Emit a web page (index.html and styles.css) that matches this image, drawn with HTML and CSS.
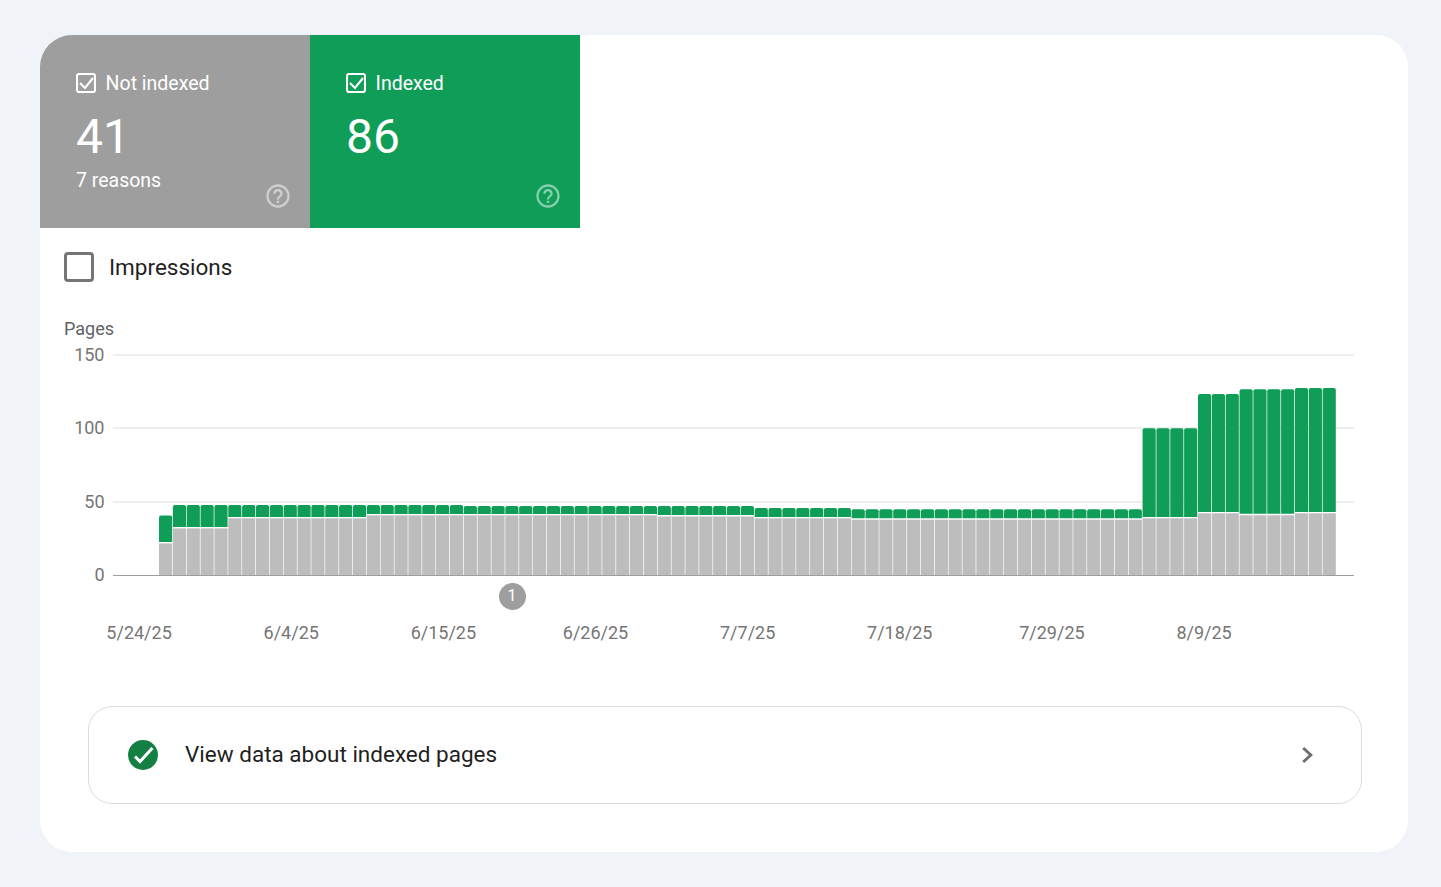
FILE: index.html
```html
<!DOCTYPE html>
<html lang="en">
<head>
<meta charset="utf-8">
<title>Page indexing</title>
<link rel="stylesheet" href="styles.css">
</head>
<body>
<main class="card">
  <section class="tiles">
    <div class="tile tile-gray">
      <div class="tile-head">
        <svg class="tile-check" viewBox="0 0 20 20"><rect x="1" y="1" width="18" height="18" rx="2"/><path d="M4 10l5 5 8-10"/></svg>
        <span>Not indexed</span>
      </div>
      <div class="tile-num">41</div>
      <div class="tile-sub">7 reasons</div>
      <svg class="tile-help" viewBox="0 0 24 24"><path d="M11 18h2v-2h-2v2zm1-16C6.48 2 2 6.48 2 12s4.48 10 10 10 10-4.48 10-10S17.52 2 12 2zm0 18c-4.41 0-8-3.59-8-8s3.59-8 8-8 8 3.59 8 8-3.59 8-8 8zm0-14c-2.21 0-4 1.79-4 4h2c0-1.1.9-2 2-2s2 .9 2 2c0 2-3 1.75-3 5h2c0-2.25 3-2.5 3-5 0-2.21-1.79-4-4-4z"/></svg>
    </div>
    <div class="tile tile-green">
      <div class="tile-head">
        <svg class="tile-check" viewBox="0 0 20 20"><rect x="1" y="1" width="18" height="18" rx="2"/><path d="M4 10l5 5 8-10"/></svg>
        <span>Indexed</span>
      </div>
      <div class="tile-num">86</div>
      <svg class="tile-help" viewBox="0 0 24 24"><path d="M11 18h2v-2h-2v2zm1-16C6.48 2 2 6.48 2 12s4.48 10 10 10 10-4.48 10-10S17.52 2 12 2zm0 18c-4.41 0-8-3.59-8-8s3.59-8 8-8 8 3.59 8 8-3.59 8-8 8zm0-14c-2.21 0-4 1.79-4 4h2c0-1.1.9-2 2-2s2 .9 2 2c0 2-3 1.75-3 5h2c0-2.25 3-2.5 3-5 0-2.21-1.79-4-4-4z"/></svg>
    </div>
  </section>

  <label class="metric"><span class="box"></span><span>Impressions</span></label>

  <section class="chart">
    <div class="y-title">Pages</div>
    <div class="plot">
      <div class="row"><span class="tick">150</span><span class="line"></span></div>
      <div class="row"><span class="tick">100</span><span class="line"></span></div>
      <div class="row"><span class="tick">50</span><span class="line"></span></div>
      <div class="row row-base"><span class="tick">0</span><span class="line"></span></div>
      <svg class="bars" viewBox="0 0 85 220" preserveAspectRatio="none">
        <defs>
          <g id="a"><path class="gr" d="M0 162.5Q0 160.5 .145 160.5H.805Q.95 160.5 .95 162.5V187H0Z"/><rect class="gy" width=".95" y="188.4" height="31.6"/></g>
          <g id="c"><path class="gr" d="M0 152Q0 150 .145 150H.805Q.95 150 .95 152V172H0Z"/><rect class="gy" width=".95" y="173.4" height="46.6"/></g>
          <g id="d"><path class="gr" d="M0 152Q0 150 .145 150H.805Q.95 150 .95 152V162H0Z"/><rect class="gy" width=".95" y="163.3" height="56.7"/></g>
          <g id="e"><path class="gr" d="M0 152Q0 150 .145 150H.805Q.95 150 .95 152V159H0Z"/><rect class="gy" width=".95" y="160.3" height="59.7"/></g>
          <g id="f"><path class="gr" d="M0 153Q0 151 .145 151H.805Q.95 151 .95 153V159H0Z"/><rect class="gy" width=".95" y="160.3" height="59.7"/></g>
          <g id="g"><path class="gr" d="M0 153Q0 151 .145 151H.805Q.95 151 .95 153V160H0Z"/><rect class="gy" width=".95" y="161.5" height="58.5"/></g>
          <g id="h"><path class="gr" d="M0 155Q0 153 .145 153H.805Q.95 153 .95 155V162H0Z"/><rect class="gy" width=".95" y="163.3" height="56.7"/></g>
          <g id="j"><path class="gr" d="M0 156.3Q0 154.3 .145 154.3H.805Q.95 154.3 .95 156.3V163.3H0Z"/><rect class="gy" width=".95" y="164.7" height="55.3"/></g>
          <g id="k"><path class="gr" d="M0 75.3Q0 73.3 .145 73.3H.805Q.95 73.3 .95 75.3V162H0Z"/><rect class="gy" width=".95" y="163.3" height="56.7"/></g>
          <g id="l"><path class="gr" d="M0 41Q0 39 .145 39H.805Q.95 39 .95 41V157H0Z"/><rect class="gy" width=".95" y="158.3" height="61.7"/></g>
          <g id="m"><path class="gr" d="M0 36.3Q0 34.3 .145 34.3H.805Q.95 34.3 .95 36.3V158.7H0Z"/><rect class="gy" width=".95" y="160.3" height="59.7"/></g>
          <g id="n"><path class="gr" d="M0 35Q0 33 .145 33H.805Q.95 33 .95 35V157H0Z"/><rect class="gy" width=".95" y="158.3" height="61.7"/></g>
        </defs>
        <use href="#a" x="0"/>
        <use href="#c" x="1"/><use href="#c" x="2"/><use href="#c" x="3"/><use href="#c" x="4"/>
        <use href="#d" x="5"/><use href="#d" x="6"/><use href="#d" x="7"/><use href="#d" x="8"/><use href="#d" x="9"/><use href="#d" x="10"/><use href="#d" x="11"/><use href="#d" x="12"/><use href="#d" x="13"/><use href="#d" x="14"/>
        <use href="#e" x="15"/><use href="#e" x="16"/><use href="#e" x="17"/><use href="#e" x="18"/><use href="#e" x="19"/><use href="#e" x="20"/><use href="#e" x="21"/>
        <use href="#f" x="22"/><use href="#f" x="23"/><use href="#f" x="24"/><use href="#f" x="25"/><use href="#f" x="26"/><use href="#f" x="27"/><use href="#f" x="28"/><use href="#f" x="29"/><use href="#f" x="30"/><use href="#f" x="31"/><use href="#f" x="32"/><use href="#f" x="33"/><use href="#f" x="34"/><use href="#f" x="35"/>
        <use href="#g" x="36"/><use href="#g" x="37"/><use href="#g" x="38"/><use href="#g" x="39"/><use href="#g" x="40"/><use href="#g" x="41"/><use href="#g" x="42"/>
        <use href="#h" x="43"/><use href="#h" x="44"/><use href="#h" x="45"/><use href="#h" x="46"/><use href="#h" x="47"/><use href="#h" x="48"/><use href="#h" x="49"/>
        <use href="#j" x="50"/><use href="#j" x="51"/><use href="#j" x="52"/><use href="#j" x="53"/><use href="#j" x="54"/><use href="#j" x="55"/><use href="#j" x="56"/><use href="#j" x="57"/><use href="#j" x="58"/><use href="#j" x="59"/><use href="#j" x="60"/><use href="#j" x="61"/><use href="#j" x="62"/><use href="#j" x="63"/><use href="#j" x="64"/><use href="#j" x="65"/><use href="#j" x="66"/><use href="#j" x="67"/><use href="#j" x="68"/><use href="#j" x="69"/><use href="#j" x="70"/>
        <use href="#k" x="71"/><use href="#k" x="72"/><use href="#k" x="73"/><use href="#k" x="74"/>
        <use href="#l" x="75"/><use href="#l" x="76"/><use href="#l" x="77"/>
        <use href="#m" x="78"/><use href="#m" x="79"/><use href="#m" x="80"/><use href="#m" x="81"/>
        <use href="#n" x="82"/><use href="#n" x="83"/><use href="#n" x="84"/>
      </svg>
      <span class="marker">1</span>
    </div>
    <div class="dates">
      <span>5/24/25</span><span>6/4/25</span><span>6/15/25</span><span>6/26/25</span><span>7/7/25</span><span>7/18/25</span><span>7/29/25</span><span>8/9/25</span>
    </div>
  </section>

  <a class="link-card">
    <svg class="ok" viewBox="0 0 30 30"><circle cx="15" cy="15" r="15"/><path d="M7 16.5l5 5 12.4-13.5"/></svg>
    <span class="link-text">View data about indexed pages</span>
    <svg class="chev" viewBox="0 0 12 18"><path d="M2.2 2l7.6 7-7.6 7"/></svg>
  </a>
</main>
</body>
</html>
```
FILE: styles.css
```css
* { box-sizing: border-box; }
html, body { height: 100%; }
body {
  margin: 0;
  padding: 35px 33px 35px 40px;
  background: #f0f4f9;
  font-family: Roboto, "Liberation Sans", sans-serif;
  color: #1f1f1f;
  overflow: hidden;
}
.card {
  height: 817px;
  background: #fff;
  border-radius: 32px;
  overflow: hidden;
}
.tiles { display: flex; }
.tile {
  position: relative;
  width: 270px;
  height: 193px;
  padding: 36px 36px 0;
  color: #fff;
}
.tile-gray { background: #9e9e9e; }
.tile-green { background: #0f9d58; }
.tile-head {
  display: flex;
  align-items: center;
  gap: 9.6px;
  height: 24px;
  font-size: 19.5px;
}
.tile-check { width: 20px; height: 20px; fill: none; stroke: #fff; stroke-width: 2.1; }
.tile-num {
  margin-top: 14px;
  font-size: 48px;
  line-height: 56px;
}
.tile-sub {
  margin-top: 4px;
  font-size: 19.5px;
  line-height: 24px;
}
.tile-help {
  position: absolute;
  right: 18px;
  bottom: 18px;
  width: 28px;
  height: 28px;
  fill: rgba(255, 255, 255, .5);
}
.metric {
  display: flex;
  align-items: center;
  gap: 15px;
  margin: 24px 0 0 24px;
  font-size: 22.5px;
  line-height: 30px;
}
.box {
  width: 30px;
  height: 30px;
  border: 3px solid #757575;
  border-radius: 4px;
}
.chart { margin: 0 0 0 24px; }
.y-title {
  margin-top: 35px;
  font-size: 18px;
  line-height: 24px;
  color: #5f6368;
}
.plot { position: relative; margin-top: 2px; }
.row {
  display: flex;
  align-items: flex-start;
  height: 73.33px;
  font-size: 18px;
  color: #757575;
}
.row-base { height: 24px; }
.tick { width: 40.5px; text-align: right; line-height: 24px; }
.line {
  margin: 11px 0 0 8.5px;
  width: 1241px;
  height: 2px;
  background: #eeeeee;
}
.row-base .line { margin-top: 12px; height: 1px; background: #9e9e9e; }
.bars {
  position: absolute;
  left: 95px;
  top: 12px;
  width: 1177.5px;
  height: 220px;
}
.gr { fill: #0f9d58; }
.gy { fill: #bdbdbd; }
.marker {
  position: absolute;
  left: 434.5px;
  top: 240px;
  width: 27px;
  height: 27px;
  border-radius: 50%;
  background: #9e9e9e;
  color: #fff;
  font-size: 16px;
  line-height: 26px;
  text-align: center;
}
.dates {
  display: flex;
  margin: 0 0 0 -1px;
  padding-top: 34px;
  font-size: 18px;
  line-height: 24px;
  color: #757575;
}
.dates span { width: 152.15px; text-align: center; }
.link-card {
  display: flex;
  align-items: center;
  width: 1274px;
  height: 98px;
  margin: 61px 0 0 48px;
  padding: 0 40px 0 39px;
  border: 1px solid #dadce0;
  border-radius: 24px;
}
.ok { width: 30px; height: 30px; flex: none; }
.ok circle { fill: #137f43; }
.ok path { fill: none; stroke: #fff; stroke-width: 3; }
.link-text { flex: 1; margin-left: 27px; padding-bottom: 2px; font-size: 22.5px; }
.chev { width: 12px; height: 18px; margin-right: 8px; fill: none; stroke: #6f6f6f; stroke-width: 3; }
```
